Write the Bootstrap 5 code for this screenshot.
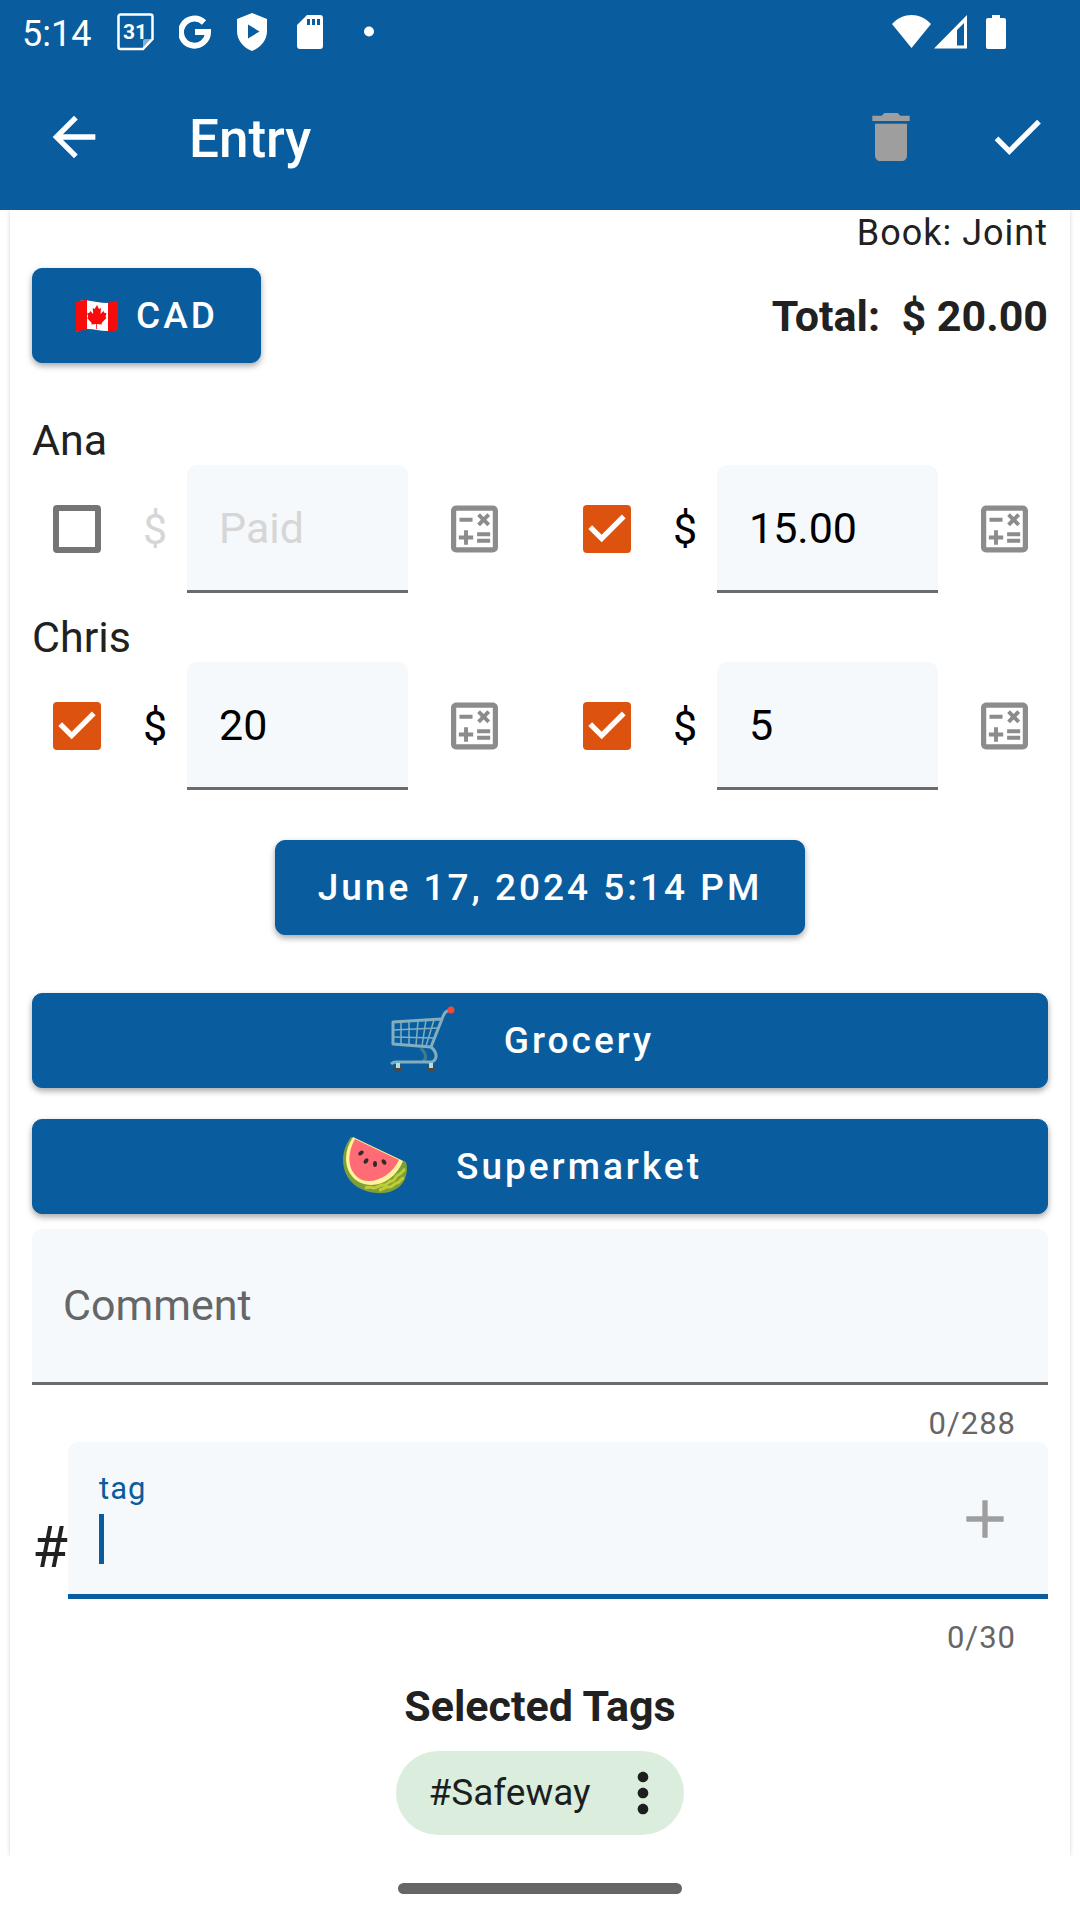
<!DOCTYPE html>
<html lang="en">
<head>
<meta charset="utf-8">
<meta name="viewport" content="width=device-width, initial-scale=1">
<title>Entry</title>
<link href="https://cdn.jsdelivr.net/npm/bootstrap@5.3.0/dist/css/bootstrap.min.css" rel="stylesheet">
<style>
:root { --brand: #095c9e; --field: #f5f9fc; --ink: #212121; --hint: #666; }
body { font-family: Roboto, "Noto Sans", sans-serif; font-size: 43px; line-height: 50px; color: var(--ink); background: #fff; }
svg { display: block; flex: none; }
.topbar { background: var(--brand); color: #fff; }
.statusbar { height: 63px; padding: 0 74px 0 22px; }
.clock { font-size: 36px; line-height: 42px; padding-top: 4px; margin-right: 26px; }
.notices { gap: 25px; }
.appbar { height: 147px; padding: 0 30px 0 42px; }
.appbar h1 { font-size: 53px; line-height: 62px; font-weight: 500; padding-top: 4px; margin-left: 83px; }
.icon-btn { background: none; border: 0; padding: 0; color: inherit; }
.sheet { margin: 0 10px; padding: 2px 22px 21px; box-shadow: 0 0 4px rgba(0, 0, 0, .18); clip-path: inset(0 -5px); }
.book { font-size: 36px; line-height: 42px; letter-spacing: 1px; }
.btn-entry { --bs-btn-color: #fff; --bs-btn-bg: var(--brand); --bs-btn-border-color: var(--brand); --bs-btn-hover-color: #fff; --bs-btn-hover-bg: #084f88; --bs-btn-font-size: 37px; --bs-btn-font-weight: 500; --bs-btn-line-height: 42px; --bs-btn-border-radius: 10px; --bs-btn-padding-y: 0; --bs-btn-padding-x: 42px; height: 95px; letter-spacing: 3px; box-shadow: 0 3px 6px rgba(0, 0, 0, .35); }
.currency-row { margin-top: 14px; margin-bottom: 53px; }
.flag-gap { gap: 17px; }
.person { margin-bottom: 20px; }
.person h2 { font-size: 43px; line-height: 49px; font-weight: 400; margin: 0; }
.shares { gap: 44px; }
.share { flex: 1 1 0; min-width: 0; padding: 0 20px 0 21px; }
.share .form-check-input { width: 48px; height: 48px; margin: 0; flex: none; border: 6px solid #757575; border-radius: 4px; background-color: #fff; }
.share .form-check-input:checked { border: 0; background-color: #de5210; background-size: 100%; background-image: url("data:image/svg+xml,%3Csvg xmlns='http://www.w3.org/2000/svg' viewBox='3 3 18 18'%3E%3Cpath fill='%23fff' d='M10 17l-5-5 1.41-1.41L10 14.17l7.59-7.59L19 8z'/%3E%3C/svg%3E"); }
.share label { width: 86px; padding-left: 42px; color: #000; }
.share .unset { color: #d6d6d6; }
.share .form-control { flex: 1 1 0; min-width: 0; height: 128px; padding: 0 32px; }
.share .icon-btn { margin-left: 43px; color: #8c8c8c; }
.form-control.filled { font-size: 43px; line-height: 50px; color: #000; background: var(--field); border: 0; border-bottom: 3px solid #6b6b6b; border-radius: 10px 10px 0 0; }
.filled::placeholder { color: #d6d6d6; opacity: 1; }
.comment-box.filled { height: 156px; padding: 0 31px 2px; }
.comment-box::placeholder { color: var(--hint); }
.when { margin-top: 50px; margin-bottom: 58px; }
.choices { gap: 31px; margin-bottom: 15px; }
.choices .btn { gap: 48px; padding-right: 78px; }
.choices svg { margin-bottom: 4px; }
.counter { font-size: 31px; line-height: 37px; letter-spacing: 1px; color: var(--hint); padding-right: 32px; margin-top: 20px; }
.hash { width: 36px; font-size: 58px; line-height: 68px; margin-bottom: 18px; text-align: center; }
.tag-box { height: 157px; padding: 28px 31px 0; background: var(--field); border-bottom: 5px solid var(--brand); border-radius: 10px 10px 0 0; }
.tag-box label { font-size: 31px; line-height: 37px; color: var(--brand); letter-spacing: 1px; margin-bottom: 7px; }
.caret { width: 5px; height: 50px; background: var(--brand); }
.tag-box .form-control { height: 50px; padding: 0; border: 0; background: none; }
.tag-box .icon-btn { color: #9e9e9e; margin-bottom: 26px; }
.picked { margin-top: 25px; }
.picked h2 { font-size: 43px; line-height: 50px; font-weight: 700; margin-bottom: 20px; }
.chip { height: 84px; padding: 0 9px 0 32px; background: #dbeedd; color: #1c1f1d; font-size: 37px; line-height: 44px; border: 0; gap: 20px; }
.homebar { width: 26.3%; height: 11px; background: #666; margin: 27px auto 26px; }
</style>
</head>
<body>
<svg width="0" height="0" class="position-absolute" aria-hidden="true">
  <symbol id="calc" viewBox="0 0 24 24"><path fill="currentColor" d="M19 3H5c-1.1 0-2 .9-2 2v14c0 1.1.9 2 2 2h14c1.1 0 2-.9 2-2V5c0-1.100-.9-2-2-2zm0 16H5V5h14v14zM6.250 7.720h5v1.500h-5zM13 15.750h5v1.500h-5zM13 13.250h5v1.500h-5zM8 18h1.500v-2h2v-1.500h-2v-2H8v2H6V16h2zM14.090 10.950l1.410-1.410 1.410 1.410 1.060-1.060-1.410-1.420 1.410-1.410L16.910 6 15.500 7.410 14.090 6l-1.060 1.060 1.410 1.410-1.410 1.420z"/></symbol>
</svg>

<header class="topbar">
  <div class="statusbar d-flex align-items-center justify-content-between">
    <div class="d-flex align-items-center">
      <span class="clock">5:14</span>
      <div class="notices d-flex align-items-center">
        <svg width="37" height="38" viewBox="0 0 37 38"><path d="M3.500 1.500h30a2 2 0 0 1 2 2V26L26 36H3.500a2 2 0 0 1-2-2V3.500a2 2 0 0 1 2-2z" fill="none" stroke="#fff" stroke-width="2.500"/><path d="M26 36v-8a2 2 0 0 1 2-2h7.500z" fill="#fff" fill-opacity=".5"/><text x="18" y="26" font-family="Roboto" font-size="21" font-weight="700" fill="#fff" text-anchor="middle">31</text></svg>
        <svg width="32" height="34" viewBox="0 0 32 34"><path d="M25 7.500A13.500 13.500 0 1 0 29 17H16" fill="none" stroke="#fff" stroke-width="6"/></svg>
        <svg width="32" height="38" viewBox="0 0 32 38"><path fill="#fff" fill-rule="evenodd" d="M16 0l15 6v12c0 9-6 16.500-15 20C7 34.500 1 27 1 18V6zM12 11.500v14L23.500 18.500z"/></svg>
        <svg width="34" height="34" viewBox="-4 0 34 34"><path fill="#fff" fill-rule="evenodd" d="M10 0h13a3 3 0 0 1 3 3v28a3 3 0 0 1-3 3H3a3 3 0 0 1-3-3V10zM10 4v6h3V4zM15 4v6h3V4zM20 4v6h3V4z"/></svg>
        <svg width="38" height="12" viewBox="0 0 38 12"><circle cx="17" cy="5.500" r="5" fill="#fff"/></svg>
      </div>
    </div>
    <svg width="114" height="36" viewBox="0 0 114 36"><g fill="#fff"><path d="M0 10C11-2 28-2 39 10L19.500 34z"/><path fill-rule="evenodd" d="M42 34.500L75 1v33.500zM65 16v15.500h7V9z"/><path d="M100 1h8v3h4a2 2 0 0 1 2 2v27a2 2 0 0 1-2 2H96a2 2 0 0 1-2-2V6a2 2 0 0 1 2-2h4z"/></g></svg>
  </div>
  <nav class="appbar d-flex align-items-center" aria-label="Entry">
    <button class="icon-btn" type="button" aria-label="Back"><svg width="64" height="64" viewBox="0 0 24 24"><path fill="currentColor" d="M20 11H7.830l5.590-5.590L12 4l-8 8 8 8 1.410-1.410L7.830 13H20z"/></svg></button>
    <h1 class="mb-0">Entry</h1>
    <button class="icon-btn ms-auto" type="button" aria-label="Delete" disabled><svg width="64" height="64" viewBox="0 0 24 24"><path fill="#9e9e9e" d="M6 19c0 1.100.9 2 2 2h8c1.100 0 2-.9 2-2V7H6zM19 4h-3.500l-1-1h-5l-1 1H5v2h14z"/></svg></button>
    <button class="icon-btn" type="button" aria-label="Save"><svg width="127" height="63" viewBox="-23.700 0 48 24"><path fill="currentColor" d="M9 16.170L4.830 12l-1.420 1.410L9 19 21 7l-1.410-1.410z"/></svg></button>
  </nav>
</header>

<main class="sheet">
  <div class="book text-end">Book: Joint</div>
  <div class="currency-row d-flex align-items-center justify-content-between">
    <button class="btn btn-entry flag-gap d-inline-flex align-items-center" type="button">
      <svg width="44" height="32" viewBox="0 0 44 32"><path d="M1 3C8-2 15 1 22 2s14 2 21-1v28c-7 3-14 2-21 1s-14-2-21 2z" fill="#fff"/><path d="M1 2c4-1.500 8-2 11-2v30c-4 0-7 .5-11 2zM33 2.500c4 0 7-1 10-2v29c-3 1.500-6 2-10 2z" fill="#f80b0b"/><path d="M22 5l2 4 2-1-.5 6 3-3 1 2 2 0-1 4 1 1-5 5 .5 1.500-5-.5v5h-.8v-5l-5 .5.5-1.500-4.500-5 1-1-1-4h2l1-2 3 3-.5-6 2 1z" fill="#f80b0b"/></svg>
      CAD
    </button>
    <div class="fw-bold">Total:&nbsp; $ 20.00</div>
  </div>

  <section class="person">
    <h2>Ana</h2>
    <div class="shares d-flex">
      <div class="share d-flex align-items-center">
        <input class="form-check-input" type="checkbox" aria-label="Ana paid">
        <label class="unset" for="ana-paid">$</label>
        <input class="form-control filled" id="ana-paid" type="text" placeholder="Paid">
        <button class="icon-btn" type="button" aria-label="Calculate"><svg width="47" height="48" viewBox="3 3 18 18"><use href="#calc" width="24" height="24"/></svg></button>
      </div>
      <div class="share d-flex align-items-center">
        <input class="form-check-input" type="checkbox" checked aria-label="Ana owes">
        <label for="ana-owes">$</label>
        <input class="form-control filled" id="ana-owes" type="text" value="15.00">
        <button class="icon-btn" type="button" aria-label="Calculate"><svg width="47" height="48" viewBox="3 3 18 18"><use href="#calc" width="24" height="24"/></svg></button>
      </div>
    </div>
  </section>
  <section class="person">
    <h2>Chris</h2>
    <div class="shares d-flex">
      <div class="share d-flex align-items-center">
        <input class="form-check-input" type="checkbox" checked aria-label="Chris paid">
        <label for="chris-paid">$</label>
        <input class="form-control filled" id="chris-paid" type="text" value="20">
        <button class="icon-btn" type="button" aria-label="Calculate"><svg width="47" height="48" viewBox="3 3 18 18"><use href="#calc" width="24" height="24"/></svg></button>
      </div>
      <div class="share d-flex align-items-center">
        <input class="form-check-input" type="checkbox" checked aria-label="Chris owes">
        <label for="chris-owes">$</label>
        <input class="form-control filled" id="chris-owes" type="text" value="5">
        <button class="icon-btn" type="button" aria-label="Calculate"><svg width="47" height="48" viewBox="3 3 18 18"><use href="#calc" width="24" height="24"/></svg></button>
      </div>
    </div>
  </section>

  <div class="when d-flex justify-content-center"><button class="btn btn-entry" type="button">June 17, 2024 5:14 PM</button></div>

  <div class="choices d-flex flex-column">
    <button class="btn btn-entry d-flex align-items-center justify-content-center" type="button">
      <svg width="66" height="66" viewBox="0 0 66 66" fill="none" stroke="#82aec0" stroke-width="3">
        <path d="M31 42c4 5 7 9 2 14" stroke="#3f7d8c"/>
        <path d="M61 4c-5 0-7 3-9 9L41 41 3 38V16l48-3" stroke-linejoin="round"/>
        <path d="M41 41c6 5 7 12 1 15H6c-3 0-4 1-5 2"/>
        <path d="M3 24l45-2M3 31l42 1M11 16v22M19 15v24M28 15l-2 24M36 14l-4 26M44 14l-8 26" stroke-width="1.500"/>
        <g stroke="none"><circle cx="8" cy="62" r="4" fill="#4a4a4a"/><circle cx="41" cy="62" r="4" fill="#4a4a4a"/><path d="M6 57h4v5H6zM39 57h4v5h-4z" fill="#a6e3ee"/><circle cx="61" cy="4" r="3.500" fill="#f04a3e"/></g>
      </svg>
      Grocery
    </button>
    <button class="btn btn-entry d-flex align-items-center justify-content-center" type="button">
      <svg width="66" height="60" viewBox="0 0 66 60">
        <path d="M9 2C-4 19-1 43 17 53c17 9 38 6 45-7 3-6 4-14 2-19z" fill="#7c9f3a"/>
        <path d="M63 34c-3 2-3 5-7 6-3 1-2 5-6 6-4 0-4 4-8 4-5-1-6 3-10 3-4-1-6-1-9 0M62 43c-3 0-4 4-7 5-3 0-4 4-8 4-4-1-6 3-10 3" fill="none" stroke="#c0cc32" stroke-width="3"/>
        <path d="M11 2C-1 20 3 41 19 48c15 6 34-2 42-22z" fill="#fff49a"/>
        <path d="M13 4C3 22 7 39 20 45c13 4 29-4 37-20z" fill="#ff6c76"/>
        <g fill="#35292b"><ellipse cx="19" cy="18" rx="2" ry="3" transform="rotate(50 19 18)"/><ellipse cx="24" cy="26" rx="2" ry="3" transform="rotate(35 24 26)"/><ellipse cx="33" cy="29" rx="2" ry="3"/><ellipse cx="42" cy="27" rx="2" ry="3" transform="rotate(-35 42 27)"/></g>
      </svg>
      Supermarket
    </button>
  </div>

  <input class="form-control filled comment-box" type="text" placeholder="Comment" aria-label="Comment" maxlength="288">
  <div class="counter text-end">0/288</div>

  <div class="d-flex">
    <span class="hash align-self-end">#</span>
    <div class="tag-box flex-grow-1 d-flex align-items-center justify-content-between">
      <div class="flex-grow-1 d-flex flex-column align-self-start">
        <label for="tag">tag</label>
        <div class="d-flex"><span class="caret"></span><input class="form-control filled" id="tag" type="text" maxlength="30"></div>
      </div>
      <button class="icon-btn" type="button" aria-label="Add tag"><svg width="64" height="64" viewBox="0 0 24 24"><path fill="currentColor" d="M19 13h-6v6h-2v-6H5v-2h6V5h2v6h6z"/></svg></button>
    </div>
  </div>
  <div class="counter text-end">0/30</div>

  <section class="picked d-flex flex-column align-items-center">
    <h2>Selected Tags</h2>
    <button class="chip rounded-pill d-flex align-items-center" type="button">#Safeway
      <svg width="64" height="64" viewBox="0 0 24 24"><path fill="currentColor" d="M12 8c1.100 0 2-.9 2-2s-.9-2-2-2-2 .9-2 2 .9 2 2 2zm0 2c-1.100 0-2 .9-2 2s.9 2 2 2 2-.9 2-2-.9-2-2-2zm0 6c-1.100 0-2 .9-2 2s.9 2 2 2 2-.9 2-2-.9-2-2-2z"/></svg>
    </button>
  </section>
</main>
<div class="homebar rounded-pill"></div>
<script src="https://cdn.jsdelivr.net/npm/bootstrap@5.3.0/dist/js/bootstrap.bundle.min.js"></script>
</body>
</html>
